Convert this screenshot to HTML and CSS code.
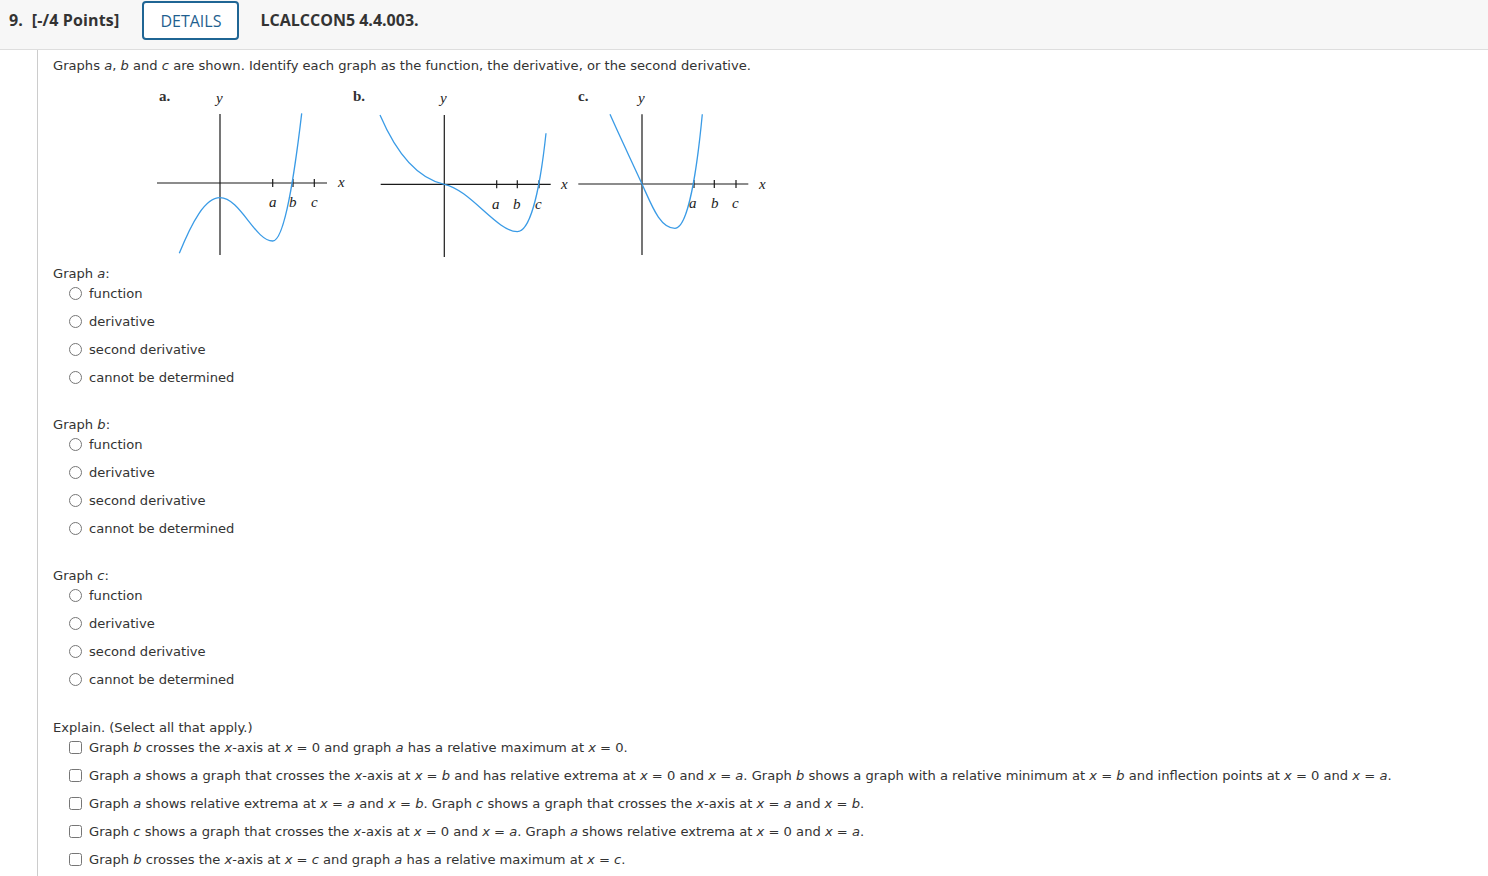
FILE: index.html
```html
<!DOCTYPE html>
<html lang="en">
<head>
    <meta charset="UTF-8">
    <title>Question 9</title>
    <link rel="stylesheet" href="styles.css">
</head>
<body>
    <div class="cabecalho">
        <span class="numero">9.</span>
        <span class="pontos">[-/4 Points]</span>
        <button class="detalhes">DETAILS</button>
        <span class="codigo">LCALCCON5 4.4.003.</span>
    </div>

    <div class="questao">
        <p class="intro">Graphs <i>a</i>, <i>b</i> and <i>c</i> are shown. Identify each graph as the function, the derivative, or the second derivative.</p>

        <svg class="graficos" width="630" height="175" viewBox="150 85 630 175">
            <g class="eixo">
                <line x1="220" y1="114" x2="220" y2="255"/>
                <line x1="157" y1="183" x2="327" y2="183"/>
                <line x1="272.7" y1="179" x2="272.7" y2="187"/>
                <line x1="293" y1="179" x2="293" y2="187"/>
                <line x1="314.3" y1="179" x2="314.3" y2="187"/>

                <line x1="444.3" y1="115" x2="444.3" y2="257"/>
                <line x1="380.7" y1="184.3" x2="550.7" y2="184.3"/>
                <line x1="496.7" y1="180.3" x2="496.7" y2="188.3"/>
                <line x1="517.3" y1="180.3" x2="517.3" y2="188.3"/>
                <line x1="539" y1="180.3" x2="539" y2="188.3"/>

                <line x1="642" y1="114.3" x2="642" y2="255"/>
                <line x1="578.3" y1="184" x2="748.3" y2="184"/>
                <line x1="694" y1="180" x2="694" y2="188"/>
                <line x1="714.3" y1="180" x2="714.3" y2="188"/>
                <line x1="736" y1="180" x2="736" y2="188"/>
            </g>
            <g class="curva">
                <path d="M179.3,253.3 C192,222 205,197.7 220,197.7 C240,197.7 255,241 272.7,241 C285,241 295,170 301.7,113.3"/>
                <path d="M380,115 C395,150 415,178 444.3,184.3 C470,189.5 497,231.7 517.3,231.7 C532,231.7 541,180 546,133.3"/>
                <path d="M610,114.3 C620,137 632,162 642,184 C652,206 660,228.3 675,228.3 C688,228.3 697,170 702.3,114.3"/>
            </g>
            <g class="rotulo">
                <text class="letra" x="159" y="101">a.</text>
                <text class="var" x="216" y="103">y</text>
                <text class="var" x="338" y="187">x</text>
                <text class="var" x="269" y="207">a</text>
                <text class="var" x="289" y="207">b</text>
                <text class="var" x="311" y="207">c</text>

                <text class="letra" x="353" y="101">b.</text>
                <text class="var" x="440" y="103">y</text>
                <text class="var" x="561" y="189">x</text>
                <text class="var" x="492" y="209">a</text>
                <text class="var" x="513" y="209">b</text>
                <text class="var" x="535" y="209">c</text>

                <text class="letra" x="578" y="101">c.</text>
                <text class="var" x="638" y="103">y</text>
                <text class="var" x="759" y="189">x</text>
                <text class="var" x="689" y="208">a</text>
                <text class="var" x="711" y="208">b</text>
                <text class="var" x="732" y="208">c</text>
            </g>
        </svg>

        <div class="grupo primeiro">
            <div class="titulo">Graph <i>a</i>:</div>
            <label class="opcao"><input type="radio" name="ga">function</label>
            <label class="opcao"><input type="radio" name="ga">derivative</label>
            <label class="opcao"><input type="radio" name="ga">second derivative</label>
            <label class="opcao"><input type="radio" name="ga">cannot be determined</label>
        </div>

        <div class="grupo">
            <div class="titulo">Graph <i>b</i>:</div>
            <label class="opcao"><input type="radio" name="gb">function</label>
            <label class="opcao"><input type="radio" name="gb">derivative</label>
            <label class="opcao"><input type="radio" name="gb">second derivative</label>
            <label class="opcao"><input type="radio" name="gb">cannot be determined</label>
        </div>

        <div class="grupo">
            <div class="titulo">Graph <i>c</i>:</div>
            <label class="opcao"><input type="radio" name="gc">function</label>
            <label class="opcao"><input type="radio" name="gc">derivative</label>
            <label class="opcao"><input type="radio" name="gc">second derivative</label>
            <label class="opcao"><input type="radio" name="gc">cannot be determined</label>
        </div>

        <div class="grupo explicar">
            <div class="titulo">Explain. (Select all that apply.)</div>
            <label class="opcao"><input type="checkbox">Graph&nbsp;<i>b</i>&nbsp;crosses the&nbsp;<i>x</i>-axis at&nbsp;<i>x</i>&nbsp;=&nbsp;0 and graph&nbsp;<i>a</i>&nbsp;has a relative maximum at&nbsp;<i>x</i>&nbsp;=&nbsp;0.</label>
            <label class="opcao"><input type="checkbox">Graph&nbsp;<i>a</i>&nbsp;shows a graph that crosses the&nbsp;<i>x</i>-axis at&nbsp;<i>x</i>&nbsp;=&nbsp;<i>b</i>&nbsp;and has relative extrema at&nbsp;<i>x</i>&nbsp;=&nbsp;0 and&nbsp;<i>x</i>&nbsp;=&nbsp;<i>a</i>. Graph&nbsp;<i>b</i>&nbsp;shows a graph with a relative minimum at&nbsp;<i>x</i>&nbsp;=&nbsp;<i>b</i>&nbsp;and inflection points at&nbsp;<i>x</i>&nbsp;=&nbsp;0 and&nbsp;<i>x</i>&nbsp;=&nbsp;<i>a</i>.</label>
            <label class="opcao"><input type="checkbox">Graph&nbsp;<i>a</i>&nbsp;shows relative extrema at&nbsp;<i>x</i>&nbsp;=&nbsp;<i>a</i>&nbsp;and&nbsp;<i>x</i>&nbsp;=&nbsp;<i>b</i>. Graph&nbsp;<i>c</i>&nbsp;shows a graph that crosses the&nbsp;<i>x</i>-axis at&nbsp;<i>x</i>&nbsp;=&nbsp;<i>a</i>&nbsp;and&nbsp;<i>x</i>&nbsp;=&nbsp;<i>b</i>.</label>
            <label class="opcao"><input type="checkbox">Graph&nbsp;<i>c</i>&nbsp;shows a graph that crosses the&nbsp;<i>x</i>-axis at&nbsp;<i>x</i>&nbsp;=&nbsp;0 and&nbsp;<i>x</i>&nbsp;=&nbsp;<i>a</i>. Graph&nbsp;<i>a</i>&nbsp;shows relative extrema at&nbsp;<i>x</i>&nbsp;=&nbsp;0 and&nbsp;<i>x</i>&nbsp;=&nbsp;<i>a</i>.</label>
            <label class="opcao"><input type="checkbox">Graph&nbsp;<i>b</i>&nbsp;crosses the&nbsp;<i>x</i>-axis at&nbsp;<i>x</i>&nbsp;=&nbsp;<i>c</i>&nbsp;and graph&nbsp;<i>a</i>&nbsp;has a relative maximum at&nbsp;<i>x</i>&nbsp;=&nbsp;<i>c</i>.</label>
        </div>
    </div>
</body>
</html>
```

FILE: styles.css
```css
body {
    margin: 0;
    background-color: #fff;
    color: #333;
    font-family: "DejaVu Sans", Verdana, sans-serif;
    font-size: 13.1px;
}
.cabecalho {
    display: flex;
    align-items: center;
    height: 40px;
    padding-bottom: 9px;
    background-color: #f7f7f7;
    border-bottom: 1px solid #dedede;
    font-family: "Open Sans", sans-serif;
    font-size: 16px;
    font-weight: bold;
    color: #333;
}
.numero {
    margin-left: 9px;
}
.pontos {
    margin-left: 9px;
    letter-spacing: 0.15px;
}
.detalhes {
    margin-left: 23px;
    width: 97px;
    height: 39px;
    margin-top: 1px;
    background-color: #fff;
    border: 2px solid #1f6594;
    border-radius: 4px;
    color: #1f5f8f;
    font-family: "Open Sans", sans-serif;
    font-size: 16px;
    padding: 0;
}
.codigo {
    margin-left: 21px;
}
.questao {
    margin-left: 37px;
    border-left: 1px solid #ccc;
    padding-left: 15px;
    padding-bottom: 20px;
}
.intro {
    margin: 0;
    padding-top: 8px;
    line-height: 16px;
}
i {
    font-style: oblique;
}
.graficos {
    display: block;
    margin-top: 11px;
    margin-left: 97px;
}
.eixo line {
    stroke: #1a1a1a;
    stroke-width: 1.2;
}
.curva path {
    fill: none;
    stroke: #3a9be6;
    stroke-width: 1.3;
}
.rotulo text {
    font-family: "Liberation Serif", serif;
    font-size: 15px;
    fill: #222;
}
.rotulo .letra {
    font-weight: bold;
    fill: #333;
}
.rotulo .var {
    font-style: italic;
}
.grupo {
    margin-top: 30px;
}
.grupo.primeiro {
    margin-top: 6px;
}
.grupo.explicar {
    margin-top: 31px;
}
.titulo {
    line-height: 16px;
}
.opcao {
    display: flex;
    align-items: center;
    height: 20px;
    margin-top: 8px;
    white-space: nowrap;
}
.titulo + .opcao {
    margin-top: 1px;
}
.opcao input {
    margin: 0 7px 0 16px;
    width: 13px;
    height: 13px;
}
```
